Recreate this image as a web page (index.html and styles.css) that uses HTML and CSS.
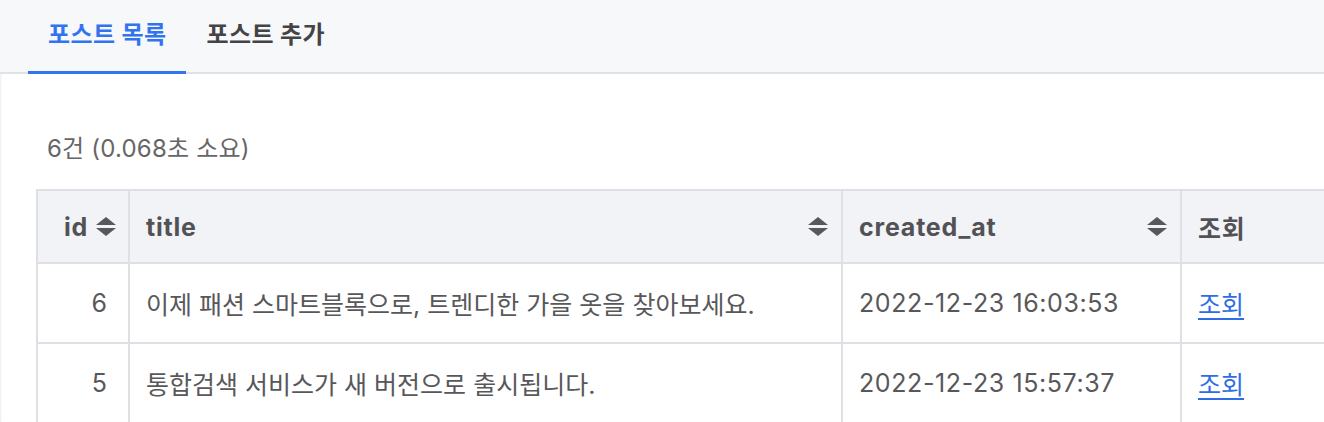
FILE: index.html
```html
<!DOCTYPE html>
<html>
<head>
  <title>포스트 목록</title>
  <meta name="viewport" content="width=device-width, initial-scale=1.0">
  <link rel="stylesheet" href="styles.css">
</head>
<body>
  <nav class="tabs">
    <a class="tab active" href="#">포스트 목록</a>
    <a class="tab" href="#">포스트 추가</a>
  </nav>

  <main class="content">
    <p class="summary">6건 (0.068초 소요)</p>

    <table class="posts">
      <colgroup>
        <col class="col-id">
        <col class="col-title">
        <col class="col-date">
        <col class="col-view">
      </colgroup>
      <thead>
        <tr>
          <th class="num">
            <span class="th-inner">id <span class="sort"></span></span>
          </th>
          <th>
            <span class="th-inner spread">title <span class="sort"></span></span>
          </th>
          <th>
            <span class="th-inner spread">created_at <span class="sort"></span></span>
          </th>
          <th>조회</th>
        </tr>
      </thead>
      <tbody>
        <tr>
          <td class="num">6</td>
          <td>이제 패션 스마트블록으로, 트렌디한 가을 옷을 찾아보세요.</td>
          <td class="date">2022-12-23 16:03:53</td>
          <td><a href="#">조회</a></td>
        </tr>
        <tr>
          <td class="num">5</td>
          <td>통합검색 서비스가 새 버전으로 출시됩니다.</td>
          <td class="date">2022-12-23 15:57:37</td>
          <td><a href="#">조회</a></td>
        </tr>
      </tbody>
    </table>
  </main>
</body>
</html>
```

FILE: styles.css
```css
body {
  margin: 0;
  height: 100vh;
  overflow: hidden;
  font-family: Inter, "Noto Sans CJK KR", sans-serif;
  color: #555558;
  background: #fff;
}

/* top tab bar */
.tabs {
  display: flex;
  height: 72px;
  padding-left: 28px;
  background: #f7f8fa;
  border-bottom: 2px solid #e1e2e6;
}

.tab {
  display: flex;
  align-items: center;
  padding: 0 20px 7px 20px;
  font-size: 24px;
  font-weight: 700;
  letter-spacing: 0.4px;
  color: #444446;
  text-decoration: none;
  margin-bottom: -2px;
  border-bottom: 3px solid transparent;
}

.tab.active {
  color: #3274f0;
  border-bottom-color: #3274f0;
}

/* page body */
.content {
  padding: 0 0 0 36px;
  box-shadow: inset 2px 0 2px -1px #ececee;
  height: calc(100vh - 74px);
  overflow: hidden;
}

.summary {
  margin: 0;
  padding: 60px 0 26px 11px;
  font-size: 24px;
  line-height: 29px;
  letter-spacing: 0.2px;
  color: #666669;
}

.posts {
  border-collapse: collapse;
  table-layout: fixed;
  width: 1343px;
  font-size: 25px;
}

.col-id { width: 92px; }
.col-title { width: 713px; }
.col-date { width: 339px; }
.col-view { width: 199px; }

.posts th,
.posts td {
  border: 2px solid #dfe0e5;
  padding: 0 16px;
  text-align: left;
}

.posts th {
  height: 71px;
  padding-right: 13px;
  background: #f2f3f7;
  font-weight: 700;
  letter-spacing: 0.8px;
  color: #525256;
}

.posts td {
  height: 78px;
  color: #58585b;
}

.posts td.date {
  letter-spacing: 0.6px;
}

.posts td.num {
  text-align: right;
  padding-right: 21px;
}

.posts th.num {
  padding: 0 12px 0 26px;
}

.th-inner {
  display: flex;
  align-items: center;
  gap: 8px;
}

.th-inner.spread {
  justify-content: space-between;
}

/* up / down sort arrows */
.sort {
  display: inline-flex;
  flex-direction: column;
  gap: 3px;
}

.sort::before,
.sort::after {
  content: "";
  width: 0;
  height: 0;
  border-left: 10px solid transparent;
  border-right: 10px solid transparent;
}

.sort::before {
  border-bottom: 8px solid #58585c;
}

.sort::after {
  border-top: 8px solid #58585c;
}

.posts a {
  color: #2e6de6;
  text-decoration: underline;
  text-underline-offset: 4px;
}
```
